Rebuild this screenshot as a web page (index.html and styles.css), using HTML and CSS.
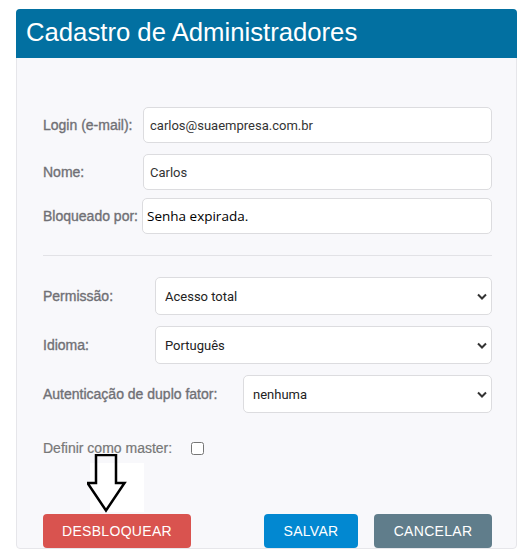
FILE: index.html
```html
<!DOCTYPE html>
<html lang="pt-br">
<head>
    <meta charset="UTF-8">
    <meta name="viewport" content="width=device-width, initial-scale=1.0">
    <title>Cadastro de Administradores</title>
    <link rel="stylesheet" href="styles.css">
</head>
<body>
    <div class="card">
        <div class="card-header">Cadastro de Administradores</div>
        <div class="card-body">
            <div class="row row-main">
                <label>Login (e-mail):</label>
                <input type="text" value="carlos@suaempresa.com.br">
            </div>
            <div class="row row-main">
                <label>Nome:</label>
                <input type="text" value="Carlos">
            </div>
            <div class="row row-blocked">
                <label>Bloqueado por:</label>
                <input type="text" class="blocked" value="Senha expirada.">
            </div>

            <hr>

            <div class="row row-select">
                <label>Permissão:</label>
                <div class="select-wrap">
                    <select><option>Acesso total</option></select>
                    <svg class="chevron" width="10" height="7" viewBox="0 0 10 7"><path d="M1 1.5 L5 5.5 L9 1.5" fill="none" stroke="#333" stroke-width="2"/></svg>
                </div>
            </div>
            <div class="row row-select">
                <label>Idioma:</label>
                <div class="select-wrap">
                    <select><option>Português</option></select>
                    <svg class="chevron" width="10" height="7" viewBox="0 0 10 7"><path d="M1 1.5 L5 5.5 L9 1.5" fill="none" stroke="#333" stroke-width="2"/></svg>
                </div>
            </div>
            <div class="row row-2fa">
                <label>Autenticação de duplo fator:</label>
                <div class="select-wrap">
                    <select><option>nenhuma</option></select>
                    <svg class="chevron" width="10" height="7" viewBox="0 0 10 7"><path d="M1 1.5 L5 5.5 L9 1.5" fill="none" stroke="#333" stroke-width="2"/></svg>
                </div>
            </div>

            <div class="bottom">
                <div class="row-master">
                    <label>Definir como master:</label>
                    <input type="checkbox">
                </div>

                <!-- seta apontando pro botão de desbloquear -->
                <svg class="arrow" width="58" height="59" viewBox="0 0 58 59">
                    <rect x="3" y="9" width="54" height="49" fill="#fff"/>
                    <path d="M9 1 H29 V29 H37.5 L19 56.5 L0.5 29 H9 Z" fill="none" stroke="#000" stroke-width="2.5"/>
                </svg>

                <div class="buttons">
                    <button class="btn btn-red">DESBLOQUEAR</button>
                    <div class="right">
                        <button class="btn btn-blue">SALVAR</button>
                        <button class="btn btn-gray">CANCELAR</button>
                    </div>
                </div>
            </div>
        </div>
    </div>
</body>
</html>
```

FILE: styles.css
```css
body {
    margin: 0;
    padding: 9px 2px 0 16px;
    background: #fff;
    font-family: "Liberation Sans", Arial, sans-serif;
    overflow: hidden;
}
.card {
    width: 501px;
    border: 1px solid #e6e6ea;
    border-radius: 4px;
    background: #f8f8fb;
    box-sizing: border-box;
}
.card-header {
    background: #0270a1;
    color: #fff;
    font-size: 25.7px;
    height: 49px;
    line-height: 47px;
    padding-left: 10px;
    margin: -1px -1px 0 -1px;
    border-radius: 4px 4px 0 0;
}
.card-body {
    padding: 49px 24px 0 26px;
}
.row {
    display: flex;
    align-items: center;
}
label {
    color: #707075;
    font-size: 14px;
    -webkit-text-stroke: 0.35px #707075;
}
.row-main label { width: 100px; }
.row-main + .row-main { margin-top: 11px; }
.row-blocked { margin-top: 8px; }
.row-blocked label { width: 99px; }
input[type="text"] {
    flex: 1;
    height: 36px;
    box-sizing: border-box;
    border: 1px solid #dcdcdf;
    border-radius: 5px;
    background: #fff;
    padding: 0 6px;
    font-family: Roboto, "Liberation Sans", sans-serif;
    font-size: 13px;
    color: #333;
}
input.blocked {
    font-family: "Open Sans", "Noto Sans", sans-serif;
    font-size: 13.5px;
    color: #000;
    padding: 0 4px;
}
hr {
    border: 0;
    border-top: 1px solid #e2e2e6;
    margin: 21px 0 21px 0;
}
.row-select label { width: 112px; }
.row-select + .row-select { margin-top: 11px; }
.row-2fa { margin-top: 11px; }
.row-2fa label { width: 200px; }
.select-wrap {
    flex: 1;
    position: relative;
}
select {
    width: 100%;
    height: 38px;
    appearance: none;
    -webkit-appearance: none;
    border: 1px solid #dcdcdf;
    border-radius: 5px;
    background: #fff;
    padding: 0 9px;
    font-family: Roboto, "Liberation Sans", sans-serif;
    font-size: 13px;
    color: #222;
}
.chevron {
    position: absolute;
    right: 5px;
    top: 16px;
    pointer-events: none;
}
.bottom {
    position: relative;
    padding-top: 25px;
}
.row-master {
    display: flex;
    align-items: center;
    height: 20px;
}
.row-master label {
    width: 148px;
    color: #777;
    -webkit-text-stroke: 0.2px #777;
}
.row-master input {
    width: 13px;
    height: 13px;
    margin: 0;
}
.arrow {
    position: absolute;
    left: 44px;
    top: 41px;
}
.buttons {
    display: flex;
    justify-content: space-between;
    margin-top: 56px;
}
.right {
    display: flex;
    gap: 16px;
}
.btn {
    height: 34px;
    border: 0;
    border-radius: 4px;
    color: #fff;
    font-family: "Liberation Sans", Arial, sans-serif;
    font-size: 14px;
    cursor: pointer;
    letter-spacing: 0.3px;
}
.btn-red { background: #d9534f; width: 148px; }
.btn-blue { background: #0288d1; width: 94px; }
.btn-gray { background: #607d8b; width: 118px; }
```
